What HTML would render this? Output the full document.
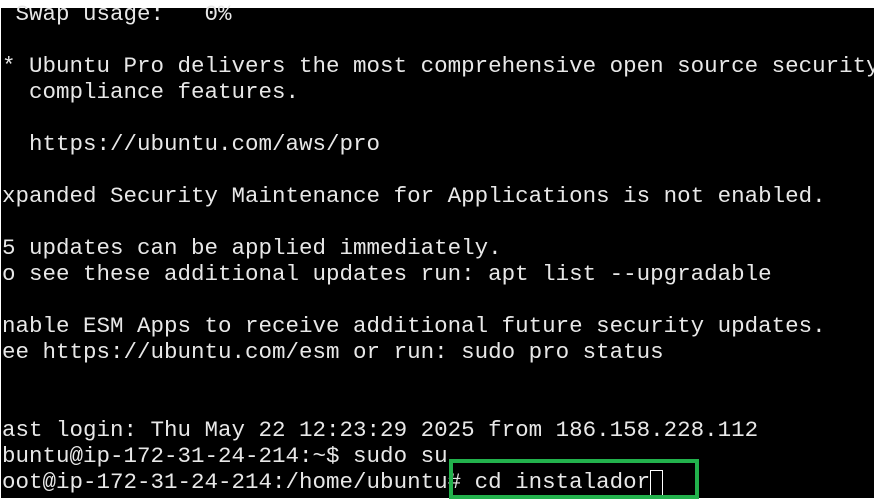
<!DOCTYPE html>
<html><head><style>
html,body{margin:0;padding:0;}
body{width:874px;height:502px;background:#fff;position:relative;overflow:hidden;}
.term{position:absolute;left:1px;top:8px;width:873px;height:490px;background:#000;}
pre{position:absolute;left:2px;top:1px;margin:0;font-family:"Liberation Mono",monospace;font-size:22.5px;line-height:26px;color:#e8e8e8;white-space:pre;}
.box{position:absolute;left:449px;top:459px;width:242px;height:32px;border:4px solid #22b14c;}
.cur{position:absolute;left:650px;top:470px;width:11px;height:25px;border:1px solid #fff;}
</style></head><body>
<div class="term"></div>
<pre> Swap usage:   0%

* Ubuntu Pro delivers the most comprehensive open source security
  compliance features.

  https://ubuntu.com/aws/pro

xpanded Security Maintenance for Applications is not enabled.

5 updates can be applied immediately.
o see these additional updates run: apt list --upgradable

nable ESM Apps to receive additional future security updates.
ee https://ubuntu.com/esm or run: sudo pro status


ast login: Thu May 22 12:23:29 2025 from 186.158.228.112
buntu@ip-172-31-24-214:~$ sudo su
oot@ip-172-31-24-214:/home/ubuntu# cd instalador</pre>
<div class="cur"></div>
<div class="box"></div>
</body></html>
